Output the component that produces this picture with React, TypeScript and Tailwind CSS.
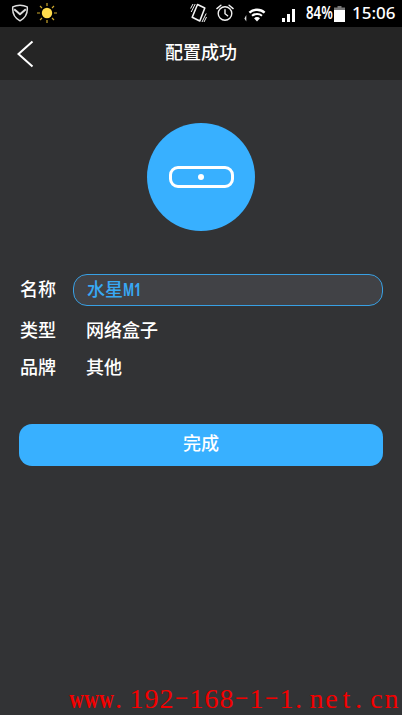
import clsx from "clsx";

const details = [
  { label: "类型", value: "网络盒子" },
  { label: "品牌", value: "其他" },
];

const site = "www.192-168-1-1.net.cn";

function ShieldIcon() {
  return (
    <svg className="h-[18px] w-[18px]" viewBox="0 0 18 18" fill="none" stroke="#dedede" strokeWidth="1.5" strokeLinejoin="round">
      <path d="M9 1.2C6.5 1.2 4 1.7 1.8 2.8C1.2 8 3.2 13.6 9 16.8C14.8 13.6 16.8 8 16.2 2.8C14 1.7 11.5 1.2 9 1.2Z" />
      <path d="M3.2 5.2L9 10.2L14.8 5.2" strokeWidth="2" />
    </svg>
  );
}

function SunIcon() {
  return (
    <svg className="h-5 w-5" viewBox="0 0 20 20" stroke="#c9a52c" strokeWidth="1.2">
      <path d="M10 0v3M10 17v3M0 10h3M17 10h3M3 3l2 2M15 15l2 2M3 17l2-2M15 5l2-2" />
      <circle cx="10" cy="10" r="5.2" fill="#ffdc4c" stroke="none" />
    </svg>
  );
}

function VibrateIcon() {
  return (
    <svg className="h-5 w-[17px]" viewBox="0 0 17 20" fill="none" stroke="#f2f2f2" strokeWidth="1">
      <path d="M7.5 1.5L14.8 5L9.8 18L2.2 14.2Z" strokeWidth="1.6" strokeLinejoin="round" />
      <path d="M5.2 1L1.2 9M3 1L.6 5.5M12 19L16.2 10.5M14 19L16.5 14" />
    </svg>
  );
}

function AlarmIcon() {
  return (
    <svg className="h-[18px] w-[18px]" viewBox="0 0 18 18" fill="none" stroke="#f2f2f2" strokeWidth="1.4" strokeLinecap="round">
      <circle cx="9" cy="9.5" r="6.8" />
      <path d="M9 5.6V9.7L11.6 11.8M.9 4.6L4.9 1.2M13.1 1.2L17.1 4.6" />
    </svg>
  );
}

function WifiIcon() {
  return (
    <svg className="h-[15px] w-[22px]" viewBox="0 0 22 15" fill="none" stroke="#fff">
      <path d="M.4 11.5L2.3 8V14.4Z" fill="#ddd" stroke="none" />
      <path d="M5.4 5.6C9.6 1.8 16.4 1.8 20.6 5.6" strokeWidth="2.4" />
      <path d="M8 8.8C10.7 6.5 15.3 6.5 18 8.8" strokeWidth="2" />
      <path d="M10 11.2C11.5 9.7 14.5 9.7 16 11.2L13 14.4Z" fill="#fff" stroke="none" />
    </svg>
  );
}

function SignalIcon() {
  return (
    <svg className="h-[13px] w-[13px]" viewBox="0 0 13 13" fill="#fff">
      <path d="M0 9h3v4H0zM5 5h3v8H5zM10 0h3v13h-3z" />
    </svg>
  );
}

function BatteryIcon() {
  return (
    <svg className="h-4 w-[11px]" viewBox="0 0 11 16">
      <path d="M3.5 0h4v1.5H11V4H0V1.5h3.5z" fill="#777" />
      <path d="M0 4h11v12H0z" fill="#fff" />
    </svg>
  );
}

function StatusBar() {
  return (
    <div className="flex h-[27px] bg-black text-white">
      <div className="flex items-start gap-2 pl-[11px]">
        <div className="pt-[4px]"><ShieldIcon /></div>
        <div className="pt-[3px]"><SunIcon /></div>
      </div>
      <div className="ml-auto flex items-start pr-[6px]">
        <div className="pt-[3px]"><VibrateIcon /></div>
        <div className="ml-[9px] pt-[4px]"><AlarmIcon /></div>
        <div className="ml-[10px] pt-[7px]"><WifiIcon /></div>
        <div className="ml-[16px] pt-[9px]"><SignalIcon /></div>
        <span className="ml-[11px] w-[28px] origin-left scale-x-[0.78] whitespace-nowrap text-[17px] leading-[26px] font-semibold">84%</span>
        <div className="pt-[6px]"><BatteryIcon /></div>
        <span className="ml-[7px] w-[44px] whitespace-nowrap text-[17px] leading-[26px] font-medium">15:06</span>
      </div>
    </div>
  );
}

function Watermark() {
  return (
    <div className="absolute bottom-0 left-[69px] flex h-[32px] font-['Liberation_Serif',serif] text-[28px] leading-[31px] text-[#f20000]">
      {site.split("").map((char, i) => (
        <span
          key={i}
          className={clsx(
            "flex w-[15px] shrink-0",
            char === "." ? "justify-start pl-px" : "justify-center",
            char === "w" && "scale-x-[0.72] font-bold",
            char === "-" && "scale-x-[2.1] text-[20px] leading-[26px]",
          )}
        >
          {char}
        </span>
      ))}
    </div>
  );
}

export default function App() {
  return (
    <div className="relative h-[715px] w-[402px] overflow-hidden bg-[#323335] font-['Noto_Sans','Noto_Sans_CJK_SC',sans-serif] text-white">
      <StatusBar />

      <header className="grid h-[53px] grid-cols-[60px_1fr_60px] items-center bg-[#252525]">
        <button className="pl-[17px]" aria-label="返回">
          <svg className="h-[28px] w-[17px]" viewBox="0 0 17 28" fill="none" stroke="#fff" strokeWidth="2">
            <path d="M15.5 1.5L1.5 14L15.5 26.5" />
          </svg>
        </button>
        <h1 className="pb-[4px] text-center text-[18px] leading-6 font-medium">配置成功</h1>
      </header>

      <main className="px-[19px] pt-[43px]">
        <div className="mx-auto flex size-[108px] items-center justify-center rounded-full bg-[#38b0ff]">
          <div className="flex h-[22px] w-[65px] items-center justify-center rounded-[9px] border-[3px] border-white">
            <div className="size-[6px] rounded-full bg-white" />
          </div>
        </div>

        <div className="mt-[43px] text-[18px] leading-6 font-medium">
          <div className="flex h-[32px] items-center">
            <span className="w-[54px] pb-[2px] pl-px">名称</span>
            <div className="flex h-[32px] flex-1 items-center rounded-[14px] border border-[#38a0e4] bg-[#414246] pb-[2px] pl-[13px] text-[#38a9f5]">
              水星<span className="origin-left scale-x-[0.66] font-bold">M1</span>
            </div>
          </div>
          <div className="mt-[5px]">
            {details.map((item) => (
              <div key={item.label} className="flex h-[37px] items-center">
                <span className="w-[67px] pl-px">{item.label}</span>
                <span>{item.value}</span>
              </div>
            ))}
          </div>
        </div>

        <button className="mt-[39px] flex h-[42px] w-full items-center justify-center rounded-[13px] bg-[#38b0ff] pb-[3px] text-[18px] font-medium">
          完成
        </button>
      </main>

      <Watermark />
    </div>
  );
}
